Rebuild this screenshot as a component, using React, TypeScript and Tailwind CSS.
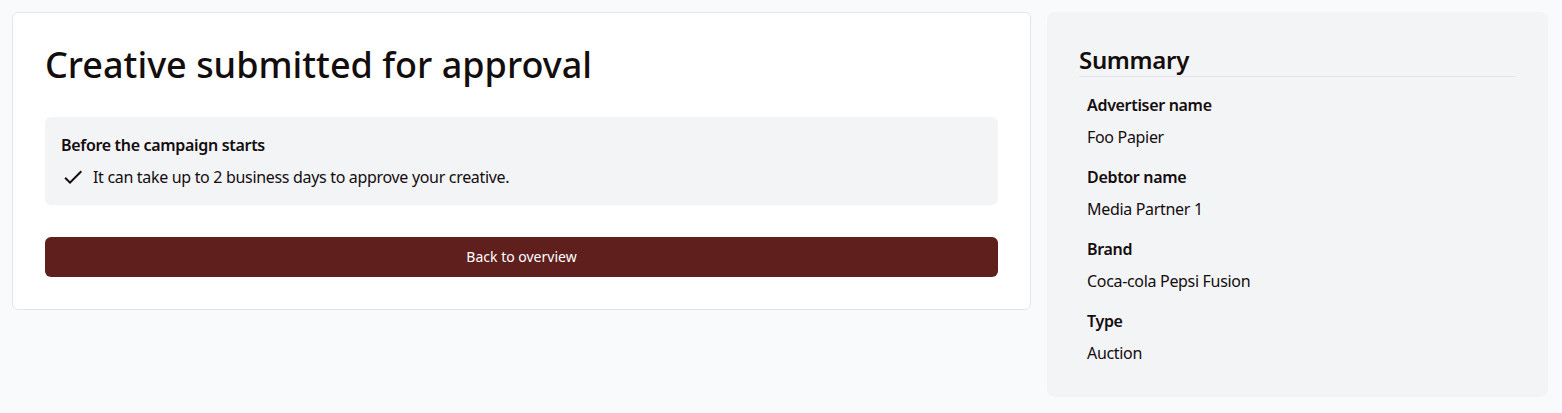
import { MdCheck } from 'react-icons/md';

const SUMMARY = [
  { label: 'Advertiser name', value: 'Foo Papier' },
  { label: 'Debtor name', value: 'Media Partner 1' },
  { label: 'Brand', value: 'Coca-cola Pepsi Fusion' },
  { label: 'Type', value: 'Auction' },
];

export default function App() {
  return (
    <div className="min-h-[413px] bg-[#f9fafb] pl-3 pr-[14px] pt-3 font-['Noto_Sans',sans-serif] text-[#140d0e] tracking-[-0.02em]">
      <div className="flex items-start gap-4">
        <div className="flex-1 rounded-md border border-[#e2e6ec] bg-white p-8">
          <h1 className="text-4xl font-medium leading-10 tracking-normal">Creative submitted for approval</h1>
          <div className="mt-8 rounded-md bg-[#f3f4f6] p-4">
            <p className="text-base font-semibold leading-6">Before the campaign starts</p>
            <div className="mt-2 flex items-center gap-2">
              <MdCheck className="h-6 w-6 shrink-0" />
              <span className="text-base leading-6">It can take up to 2 business days to approve your creative.</span>
            </div>
          </div>
          <button className="mt-8 flex h-10 w-full items-center justify-center rounded-md bg-[#5f201d] text-sm tracking-normal text-white">
            Back to overview
          </button>
        </div>
        <aside className="w-[501px] shrink-0 rounded-lg bg-[#f3f4f6] p-8">
          <h2 className="border-b border-[#e2e6ec] text-2xl font-semibold leading-8">Summary</h2>
          <dl className="mt-4 flex flex-col gap-4 px-2">
            {SUMMARY.map((item) => (
              <div key={item.label} className="flex flex-col gap-2">
                <dt className="text-base font-semibold leading-6">{item.label}</dt>
                <dd className="text-base leading-6">{item.value}</dd>
              </div>
            ))}
          </dl>
        </aside>
      </div>
    </div>
  );
}
